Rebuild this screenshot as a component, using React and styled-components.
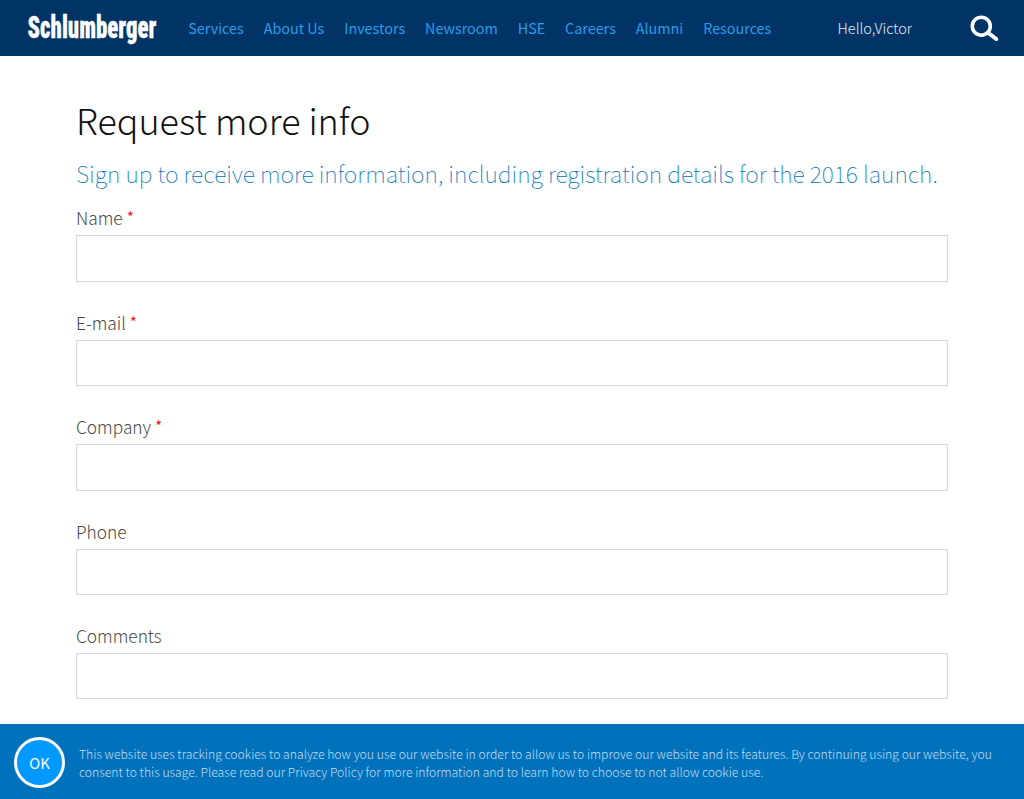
import React from "react";
import styled, { createGlobalStyle } from "styled-components";

const GlobalStyle = createGlobalStyle`
  * { box-sizing: border-box; }
  body {
    margin: 0;
    height: 799px;
    overflow: hidden;
    background: #fff;
    font-family: "Noto Sans CJK SC", "Noto Sans", sans-serif;
    font-weight: 300;
  }
`;

const Page = styled.div`
  display: flex;
  flex-direction: column;
  width: 1024px;
  height: 799px;
  overflow: hidden;
`;

const Header = styled.header`
  display: flex;
  align-items: center;
  flex: none;
  height: 56px;
  padding: 0 25px 0 26px;
  background: #003366;
`;

const Logo = styled.svg`
  flex: none;
  display: block;
  width: 134px;
  height: 56px;
  overflow: visible;
`;

const Nav = styled.nav`
  display: flex;
  gap: 19.9px;
  margin-left: 28.2px;
`;

const NavLink = styled.a`
  color: #2e9be6;
  font-size: 14.36px;
  font-weight: 400;
  line-height: 20px;
  white-space: nowrap;
`;

const Greeting = styled.span`
  margin-left: auto;
  color: #e6ecf2;
  font-size: 14.5px;
  line-height: 20px;
  white-space: nowrap;
`;

const SearchIcon = styled.svg`
  flex: none;
  display: block;
  width: 30px;
  height: 28px;
  margin-left: 57px;
`;

const Main = styled.main`
  flex: 1;
  min-height: 0;
  overflow: hidden;
  padding: 38px 76px 0;
`;

const Title = styled.h1`
  margin: 0;
  color: #111;
  font-size: 35.9px;
  font-weight: 300;
  line-height: 50px;
  white-space: nowrap;
`;

const Subtitle = styled.h2`
  margin: 11px 0 0;
  color: #0072bc;
  font-size: 23.06px;
  font-weight: 100;
  line-height: 36px;
  white-space: nowrap;
`;

const Form = styled.form`
  padding-top: 1px;
`;

const Field = styled.label`
  display: block;
  height: 104.4px;
  padding-top: 13.4px;
`;

const FieldLabel = styled.span`
  display: block;
  color: #484848;
  font-size: 17.3px;
  line-height: 26px;
`;

const Required = styled.span`
  color: #f00;
`;

const Input = styled.input`
  display: block;
  width: 872px;
  height: 46.4px;
  margin-top: 4.1px;
  border: 1px solid #d8d8d8;
  background: #fff;
  outline: none;
`;

const CookieBar = styled.footer`
  display: flex;
  align-items: center;
  flex: none;
  height: 75.4px;
  padding: 2px 14px 0;
  background: #0072bc;
`;

const OkButton = styled.button`
  flex: none;
  width: 51px;
  height: 51px;
  padding: 0;
  border: 3px solid #fff;
  border-radius: 50%;
  background: #0099ff;
  color: #fff;
  font-family: inherit;
  font-size: 14.8px;
  font-weight: 400;
  line-height: 45px;
`;

const CookieText = styled.p`
  margin: 1px 0 0 14px;
  color: #c5ddf0;
  font-size: 12.19px;
  line-height: 18px;
  white-space: nowrap;
`;

const links = ["Services", "About Us", "Investors", "Newsroom", "HSE", "Careers", "Alumni", "Resources"];

const fields = [
  { label: "Name", required: true },
  { label: "E-mail", required: true },
  { label: "Company", required: true },
  { label: "Phone" },
  { label: "Comments" },
];

export default function App() {
  return (
    <Page>
      <GlobalStyle />
      <Header>
        <Logo viewBox="0 0 134 56" role="img" aria-label="Schlumberger">
          <text
            x="1.5"
            y="38"
            textLength="129"
            lengthAdjust="spacingAndGlyphs"
            fill="#fff"
            stroke="#fff"
            strokeWidth="0.3"
            fontFamily="'Roboto Condensed', Roboto, sans-serif"
            fontWeight="900"
            fontSize="31.5"
          >
            Schlumberger
          </text>
        </Logo>
        <Nav>
          {links.map((l) => (
            <NavLink key={l}>{l}</NavLink>
          ))}
        </Nav>
        <Greeting>Hello,Victor</Greeting>
        <SearchIcon viewBox="0 0 30 28">
          <circle cx="12.3" cy="12.2" r="9" fill="none" stroke="#fff" strokeWidth="3.6" />
          <path d="M19 18.7 L27.2 25" stroke="#fff" strokeWidth="4" strokeLinecap="round" />
        </SearchIcon>
      </Header>
      <Main>
        <Title>Request more info</Title>
        <Subtitle>Sign up to receive more information, including registration details for the 2016 launch.</Subtitle>
        <Form>
          {fields.map((f) => (
            <Field key={f.label}>
              <FieldLabel>
                {f.label}
                {f.required && <Required> *</Required>}
              </FieldLabel>
              <Input />
            </Field>
          ))}
        </Form>
      </Main>
      <CookieBar>
        <OkButton>OK</OkButton>
        <CookieText>
          This website uses tracking cookies to analyze how you use our website in order to allow us to improve our website and its features. By continuing using our website, you
          <br />
          consent to this usage. Please read our Privacy Policy for more information and to learn how to choose to not allow cookie use.
        </CookieText>
      </CookieBar>
    </Page>
  );
}
